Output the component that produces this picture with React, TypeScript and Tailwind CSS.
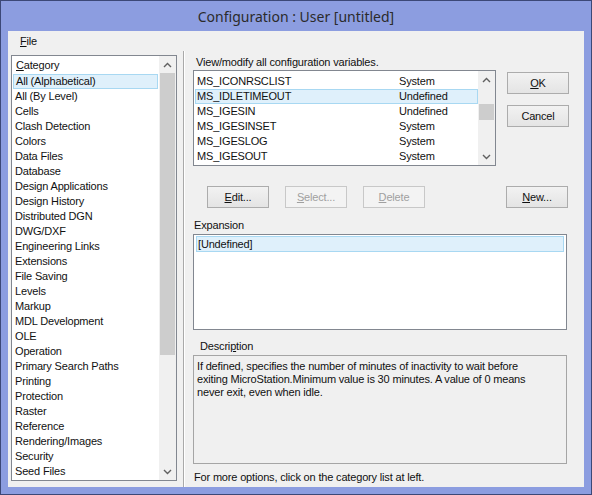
import React from "react";

const categories = [
  "All (Alphabetical)",
  "All (By Level)",
  "Cells",
  "Clash Detection",
  "Colors",
  "Data Files",
  "Database",
  "Design Applications",
  "Design History",
  "Distributed DGN",
  "DWG/DXF",
  "Engineering Links",
  "Extensions",
  "File Saving",
  "Levels",
  "Markup",
  "MDL Development",
  "OLE",
  "Operation",
  "Primary Search Paths",
  "Printing",
  "Protection",
  "Raster",
  "Reference",
  "Rendering/Images",
  "Security",
  "Seed Files",
];

const variables: [string, string][] = [
  ["MS_ICONRSCLIST", "System"],
  ["MS_IDLETIMEOUT", "Undefined"],
  ["MS_IGESIN", "Undefined"],
  ["MS_IGESINSET", "System"],
  ["MS_IGESLOG", "System"],
  ["MS_IGESOUT", "System"],
];

function Chevron({ up }: { up?: boolean }) {
  return (
    <svg width="9" height="6" viewBox="0 0 9 6" className="block">
      <polyline
        points={up ? "1,5 4.5,1.5 8,5" : "1,1 4.5,4.5 8,1"}
        fill="none"
        stroke="#606060"
        strokeWidth="1.4"
      />
    </svg>
  );
}

function Btn({
  children,
  disabled,
  className = "",
}: {
  children: React.ReactNode;
  disabled?: boolean;
  className?: string;
}) {
  return (
    <div
      className={
        "w-[62px] h-[22px] flex items-center justify-center border text-[11px] leading-[13px] " +
        (disabled
          ? "border-[#c8c8c8] bg-[#f3f3f3] text-[#a0a0a0] "
          : "border-[#acacac] bg-gradient-to-b from-[#f2f2f2] to-[#e4e4e4] text-[#111] ") +
        className
      }
    >
      {children}
    </div>
  );
}

export default function App() {
  return (
    <div className="w-[592px] h-[495px] bg-[#8c9de0] border border-[#3c4877] flex flex-col [font-family:'Liberation_Sans',Arial,sans-serif] text-[11px] leading-[13px] tracking-[-0.17px] text-[#111] overflow-hidden">
      {/* Title bar */}
      <div className="h-[30px] shrink-0 flex items-center justify-center pt-[1px] [font-family:'Noto_Sans',sans-serif] text-[14px] tracking-normal text-[#2b2b2b]">
        Configuration : User [untitled]
      </div>

      {/* Client */}
      <div className="mx-[7px] mb-[7px] flex-1 bg-[#f0f0f0] flex flex-col min-h-0">
        {/* Menu bar */}
        <div className="h-[20px] shrink-0 flex items-center pl-[12px] pt-[1px]">
          <span>
            <span className="underline">F</span>ile
          </span>
        </div>

        {/* Body */}
        <div className="flex-1 flex min-h-0">
          {/* Left panel */}
          <div className="w-[175px] shrink-0 pl-[3px] pt-[4px]">
            <div className="w-[166px] h-[426px] border border-[#828790] bg-white flex">
              <div className="w-[147px] flex flex-col">
                <div className="h-[18px] flex items-center pl-[4px]">
                  <span>
                    <span className="underline">C</span>ategory
                  </span>
                </div>
                {categories.map((c, i) => (
                  <div
                    key={c}
                    className={
                      "h-[15px] flex items-center pl-[2px] ml-[1px] mr-[1px] " +
                      (i === 0 ? "bg-[#dff0fb] border border-[#a8d8f2] pl-[1px]" : "")
                    }
                  >
                    {c}
                  </div>
                ))}
              </div>
              <div className="w-[17px] flex flex-col bg-[#f0f0f0]">
                <div className="h-[17px] flex items-center justify-center">
                  <Chevron up />
                </div>
                <div className="h-[282px] mx-[1px] bg-[#cdcdcd]" />
                <div className="flex-1" />
                <div className="h-[17px] flex items-center justify-center">
                  <Chevron />
                </div>
              </div>
            </div>
          </div>

          {/* Splitter */}
          <div className="w-[2px] shrink-0 border-l border-[#a9a9a9] border-r border-r-white" />

          {/* Right panel */}
          <div className="flex-1 pl-[8px] flex flex-col">
            <div className="mt-[5px] h-[13px] pl-[3px]">View/modify all configuration variables.</div>
            <div className="flex">
              <div className="mt-[1px] w-[303px] h-[96px] border border-[#828790] bg-white flex">
                <div className="flex-1 pt-[3px] pl-[1px]">
                  {variables.map(([n, t], i) => (
                    <div
                      key={n}
                      className={
                        "h-[15px] flex items-center " +
                        (i === 1 ? "bg-[#dff0fb] border border-[#a8d8f2]" : "border border-transparent")
                      }
                    >
                      <span className="w-[203px] pl-[1px]">{n}</span>
                      <span>{t}</span>
                    </div>
                  ))}
                </div>
                <div className="w-[17px] flex flex-col bg-[#f0f0f0]">
                  <div className="h-[17px] flex items-center justify-center">
                    <Chevron up />
                  </div>
                  <div className="h-[16px]" />
                  <div className="h-[16px] mx-[1px] bg-[#cdcdcd]" />
                  <div className="flex-1" />
                  <div className="h-[17px] flex items-center justify-center">
                    <Chevron />
                  </div>
                </div>
              </div>
              <div className="ml-[11px] mt-[3px] flex flex-col gap-[11px]">
                <Btn>
                  <span>
                    <span className="underline">O</span>K
                  </span>
                </Btn>
                <Btn>Cancel</Btn>
              </div>
            </div>

            {/* Buttons row */}
            <div className="mt-[20px] flex pl-[14px]">
              <Btn>
                <span>
                  <span className="underline">E</span>dit...
                </span>
              </Btn>
              <Btn disabled className="ml-[16px]">
                <span>
                  <span className="underline">S</span>elect...
                </span>
              </Btn>
              <Btn disabled className="ml-[16px]">
                <span>
                  <span className="underline">D</span>elete
                </span>
              </Btn>
              <Btn className="ml-[81px]">
                <span>
                  <span className="underline">N</span>ew...
                </span>
              </Btn>
            </div>

            {/* Expansion */}
            <div className="mt-[11px] h-[13px] pl-[1px]">Expansion</div>
            <div className="mt-[2px] w-[374px] h-[96px] border border-[#828790] bg-white pt-[1px] px-[2px]">
              <div className="h-[16px] flex items-center bg-[#dff0fb] border border-[#a8d8f2] pl-[1px]">
                [Undefined]
              </div>
            </div>

            {/* Description */}
            <div className="mt-[10px] h-[13px] pl-[7px]">
              Descri<span className="underline">p</span>tion
            </div>
            <div className="mt-[2px] w-[374px] h-[109px] border border-[#a5a5a5] bg-[#f0f0f0] pt-[4px] pl-[3px] leading-[13px]">
              If defined, specifies the number of minutes of inactivity to wait before
              <br />
              exiting MicroStation.Minimum value is 30 minutes. A value of 0 means
              <br />
              never exit, even when idle.
            </div>

            <div className="mt-[7px] h-[13px] pl-[1px]">For more options, click on the category list at left.</div>
          </div>
        </div>
      </div>
    </div>
  );
}
